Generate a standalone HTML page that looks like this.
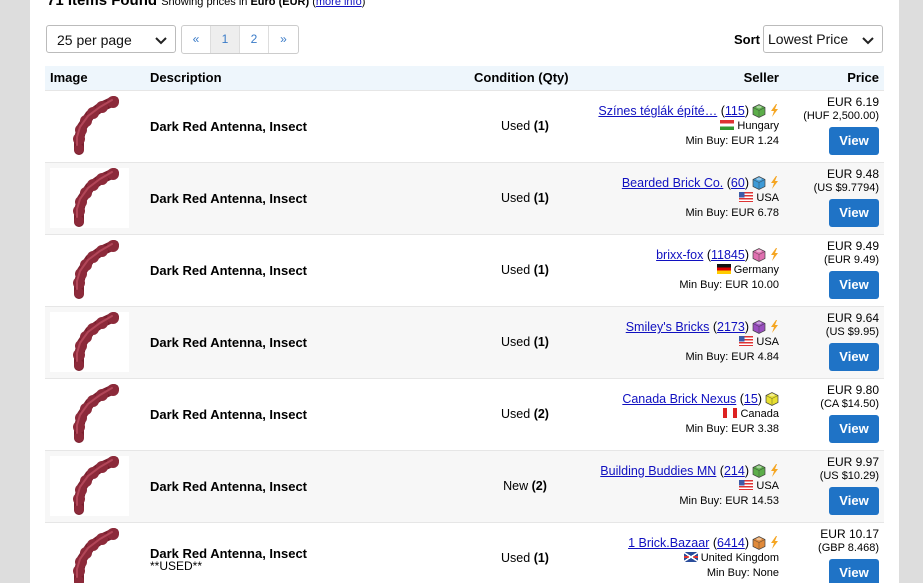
<!DOCTYPE html>
<html><head><meta charset="utf-8"><style>
*{box-sizing:border-box}
html,body{margin:0;width:923px;height:583px;overflow:hidden}
body{background:#ddd;font-family:"Liberation Sans",Arial,sans-serif;font-size:12px;color:#000;position:relative}
.main{position:absolute;left:30px;top:0;width:869px;height:583px;background:#fff}
.a{position:absolute}
.sel{position:absolute;border:1px solid #bbb;border-radius:3px;background:#fff;font-size:14px;padding:6px 10px;color:#111}
.sel svg{position:absolute;right:8px;top:11px}
.pg{position:absolute;left:181px;top:25px;height:29px;border:1px solid #ccc;border-radius:3px;display:flex}
.pg div{width:29px;border-right:1px solid #ddd;text-align:center;line-height:27px;color:#3a7bc8;font-size:12px}
.pg div:last-child{border-right:none}
.hdr{position:absolute;left:45px;top:66px;width:839px;height:24px;background:#eef6fc;font-weight:bold;font-size:13px}
.row{position:absolute;left:45px;width:839px;height:72px;border-top:1px solid #e6e6e6}
.g{background:#f7f7f7}
.imgbox{position:absolute;left:5px;top:5px;width:79px;height:60px;background:#fff}
.desc{position:absolute;left:105px;top:28px;font-weight:bold;font-size:13px}
.cond{position:absolute;left:430px;width:100px;text-align:center;top:28px;font-size:12.5px}
.sell{position:absolute;right:105px;top:12px;text-align:right;font-size:12px;line-height:16px}
.sell .n{font-size:12.5px}
.sell a{text-decoration:underline;color:#1010c0}
.sell .l2,.sell .l3{font-size:11px;line-height:15px}
.price{position:absolute;right:5px;top:5px;text-align:right;font-size:12px;line-height:13px}
.price .s{font-size:11px}
.btn{display:block;margin-left:auto;margin-top:4px;width:50px;height:28px;background:#1f73c6;color:#fff;border-radius:3px;text-align:center;line-height:28px;font-weight:bold;font-size:13px}
.flag{display:inline-block;width:14px;height:10px;vertical-align:-1px;margin-right:3px}
.ic{display:inline-block;vertical-align:-3px;margin-left:3px}
</style></head><body>
<div class="main"></div>
<div class="a" style="left:47px;top:-8px;font-size:15px;font-weight:bold">71 Items Found <span style="font-size:11px;font-weight:normal">Showing prices in <b>Euro (EUR)</b> (<u style="color:#1010c0">more info</u>)</span></div>
<div class="sel" style="left:46px;top:25px;width:130px;height:28px">25 per page<svg width="12" height="8"><path d="M1 1l5 5 5-5" stroke="#222" stroke-width="2" fill="none"/></svg></div>
<div class="pg"><div>«</div><div style="background:#eee">1</div><div>2</div><div>»</div></div>
<div class="a" style="left:734px;top:32px;font-weight:bold;font-size:13px">Sort</div>
<div class="sel" style="left:763px;top:25px;width:120px;height:28px;padding:5px 4px">Lowest Price<svg width="12" height="8"><path d="M1 1l5 5 5-5" stroke="#222" stroke-width="2" fill="none"/></svg></div>
<div class="hdr"><span class="a" style="left:5px;top:4px">Image</span><span class="a" style="left:105px;top:4px">Description</span><span class="a" style="left:429px;top:4px">Condition (Qty)</span><span class="a" style="right:105px;top:4px">Seller</span><span class="a" style="right:5px;top:4px">Price</span></div>
<svg width="0" height="0" style="position:absolute"><defs>
<g id="ant"><path d="M19 55 L19 44 L22 32 L30 20 L41 12 L54 6" stroke="#7a1f2e" stroke-width="10" stroke-linecap="round" stroke-linejoin="round" fill="none"/>
<g fill="#8c2a3a"><circle cx="19" cy="54" r="5"/><circle cx="19" cy="44" r="6"/><circle cx="21" cy="35" r="6"/><circle cx="26" cy="26" r="6"/><circle cx="33" cy="18" r="6"/><circle cx="42" cy="12" r="6"/><circle cx="53" cy="7" r="6"/></g>
<path d="M17 50 L17 42 L20 32 L28 21 L40 12 L52 5" stroke="#b24658" stroke-width="2" stroke-linecap="round" fill="none"/></g>
<g id="bolt"><path d="M7 0L2 7h3L3 13l6-8H6l2-5z" fill="#f5a623"/></g>
</defs></svg>
<div id="rows"></div>
<script>
const d=[
["Színes téglák építé…","115","#5cae4a",1,"hu","Hungary","EUR 1.24","EUR 6.19","(HUF 2,500.00)","Used","1"],
["Bearded Brick Co.","60","#3e9ad6",1,"us","USA","EUR 6.78","EUR 9.48","(US $9.7794)","Used","1"],
["brixx-fox","11845","#e070b0",1,"de","Germany","EUR 10.00","EUR 9.49","(EUR 9.49)","Used","1"],
["Smiley's Bricks","2173","#9a4fc0",1,"us","USA","EUR 4.84","EUR 9.64","(US $9.95)","Used","1"],
["Canada Brick Nexus","15","#e8e030",0,"ca","Canada","EUR 3.38","EUR 9.80","(CA $14.50)","Used","2"],
["Building Buddies MN","214","#5cae4a",1,"us","USA","EUR 14.53","EUR 9.97","(US $10.29)","New","2"],
["1 Brick.Bazaar","6414","#e08a3a",1,"gb","United Kingdom","None","EUR 10.17","(GBP 8.468)","Used","1"]];
const flags={hu:'<span class="flag" style="background:linear-gradient(#d33 33%,#fff 33% 66%,#393 66%)"></span>',us:'<span class="flag" style="background:linear-gradient(90deg,#3c5ba8 40%,transparent 40%) top/100% 55% no-repeat,repeating-linear-gradient(#d33 0 1.5px,#fff 1.5px 3px)"></span>',de:'<span class="flag" style="background:linear-gradient(#111 33%,#d00 33% 66%,#fc0 66%)"></span>',ca:'<span class="flag" style="background:linear-gradient(90deg,#d22 28%,#fff 28% 72%,#d22 72%)"></span>',gb:'<span class="flag" style="background:linear-gradient(33deg,transparent 45%,#fff 45% 55%,transparent 55%),linear-gradient(-33deg,transparent 45%,#fff 45% 55%,transparent 55%),linear-gradient(#2a4d9b 40%,#d33 40% 60%,#2a4d9b 60%)"></span>'};
let h="";
d.forEach((r,i)=>{
 const top=90+i*72;
 const cube=`<svg class="ic" width="14" height="15"><path d="M1 4.5l6-3 6 3v7l-6 3-6-3z" fill="${r[2]}" stroke="#444" stroke-width=".7"/><path d="M1 4.5l6 3 6-3M7 7.5v7" stroke="#333" stroke-width=".6" fill="none" opacity=".6"/><ellipse cx="7" cy="4" rx="2.7" ry="1.4" fill="#fff" opacity=".45"/></svg>`;
 const bolt=r[3]?`<svg class="ic" width="10" height="14"><use href="#bolt"/></svg>`:"";
 h+=`<div class="row ${i%2?'g':''}" style="top:${top}px">
 ${i%2?'<div class="imgbox"></div>':''}
 <svg class="a" style="left:15px;top:4px" width="70" height="64"><use href="#ant"/></svg>
 <div class="desc" ${i==6?'style="top:23px"':''}>Dark Red Antenna, Insect${i==6?'<div style="font-weight:normal;font-size:12px;line-height:11px">**USED**</div>':''}</div>
 <div class="cond">${r[9]} <b>(${r[10]})</b></div>
 <div class="sell"><div class="n"><a>${r[0]}</a> (<a>${r[1]}</a>)${cube}${bolt}</div><div class="l2">${flags[r[4]]}${r[5]}</div><div class="l3">Min Buy: ${r[6]}</div></div>
 <div class="price">${r[7]}<br><span class="s">${r[8]}</span><span class="btn">View</span></div>
 </div>`;
});
document.getElementById("rows").innerHTML=h;
</script>
</body></html>
